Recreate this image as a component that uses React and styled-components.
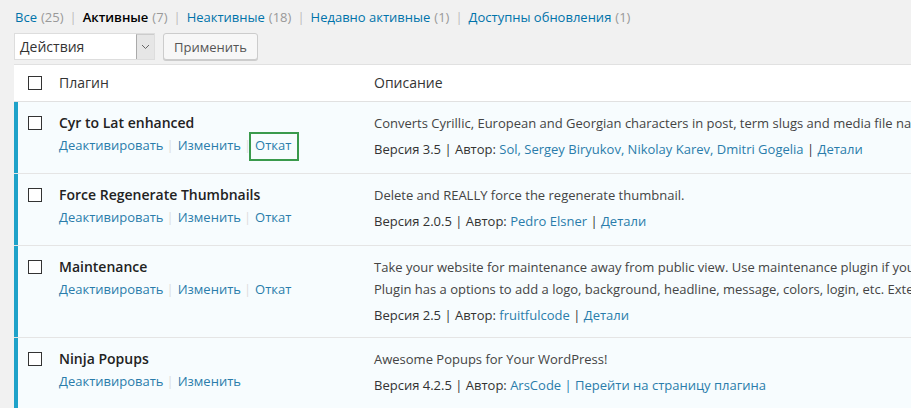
import styled, { createGlobalStyle } from "styled-components"

const GlobalStyle = createGlobalStyle`
  html, body {
    margin: 0;
    padding: 0;
    background: #f1f1f1;
    overflow: hidden;
  }
  body {
    font-family: "Open Sans", "Noto Sans", sans-serif;
    font-size: 13px;
    color: #444;
  }
`

const filters = [
  { label: "Все", count: 25 },
  { label: "Активные", count: 7, current: true },
  { label: "Неактивные", count: 18 },
  { label: "Недавно активные", count: 1 },
  { label: "Доступны обновления", count: 1 },
]

const plugins = [
  {
    name: "Cyr to Lat enhanced",
    actions: ["Деактивировать", "Изменить", "Откат"],
    marked: "Откат",
    desc: [
      "Converts Cyrillic, European and Georgian characters in post, term slugs and media file names to Latin ones.",
    ],
    version: "3.5",
    author: "Sol, Sergey Biryukov, Nikolay Karev, Dmitri Gogelia",
    more: "Детали",
  },
  {
    name: "Force Regenerate Thumbnails",
    actions: ["Деактивировать", "Изменить", "Откат"],
    desc: ["Delete and REALLY force the regenerate thumbnail."],
    version: "2.0.5",
    author: "Pedro Elsner",
    more: "Детали",
  },
  {
    name: "Maintenance",
    actions: ["Деактивировать", "Изменить", "Откат"],
    desc: [
      "Take your website for maintenance away from public view. Use maintenance plugin if you",
      "Plugin has a options to add a logo, background, headline, message, colors, login, etc. Exte",
    ],
    version: "2.5",
    author: "fruitfulcode",
    more: "Детали",
  },
  {
    name: "Ninja Popups",
    actions: ["Деактивировать", "Изменить"],
    desc: ["Awesome Popups for Your WordPress!"],
    version: "4.2.5",
    author: "ArsCode",
    more: "Перейти на страницу плагина",
  },
]

const Page = styled.div`
  padding: 6px 0 0 14px;
`

const SubNav = styled.ul`
  display: flex;
  margin: 0;
  padding: 0 0 0 1px;
  list-style: none;
  line-height: 22px;
  white-space: nowrap;
`

const NavItem = styled.li`
  color: #aaa;
  & + &::before {
    content: "|";
    margin: 0 6px 0 6px;
    color: #bbb;
  }
`

const NavLink = styled.a`
  color: ${(p) => (p.$current ? "#000" : "#0073aa")};
  font-weight: ${(p) => (p.$current ? 600 : 400)};
  text-decoration: none;
`

const Count = styled.span`
  color: #999;
  margin-left: 4px;
`

const Toolbar = styled.div`
  display: flex;
  gap: 8px;
  margin-top: 5px;
  height: 27px;
`

const Select = styled.div`
  display: flex;
  width: 141px;
  box-sizing: border-box;
  border: 1px solid #ddd;
  background: #fff;
  color: #333;
  font-size: 14px;
`

const SelectValue = styled.span`
  flex: 1;
  padding-left: 5px;
  line-height: 25px;
`

const SelectArrow = styled.span`
  display: flex;
  align-items: center;
  justify-content: center;
  width: 17px;
  background: #e6e6e6;
  border-left: 1px solid #aaa;
  border-top: 1px solid #ccc;
  color: #666;
`

const Button = styled.button`
  width: 95px;
  height: 27px;
  padding: 0;
  border: 1px solid #ccc;
  border-radius: 3px;
  background: #f7f7f7;
  box-shadow: 0 1px 0 #ccc;
  font-family: inherit;
  font-size: 13px;
  color: #555;
`

const Table = styled.div`
  width: 1200px;
  margin-top: 4px;
  border-top: 1px solid #e1e1e1;
  background: #fff;
`

const Row = styled.div`
  display: grid;
  grid-template-columns: 45px 315px 1fr;
  box-sizing: border-box;
  border-bottom: 1px solid #e5e5e5;
  line-height: 22px;
  background: ${(p) => (p.$head ? "#fff" : "#f7fcfe")};
  box-shadow: ${(p) => (p.$head ? "none" : "inset 4px 0 0 #1fa2c9")};
  padding: ${(p) => (p.$head ? "7px 0 7px" : "10px 0 11px")};
  ${(p) => p.$head && "border-bottom-color: #e1e1e1;"}
`

const CheckCell = styled.div`
  display: flex;
  align-items: flex-start;
  padding: 4px 0 0 14px;
`

const Check = styled.input.attrs({ type: "checkbox" })`
  appearance: none;
  margin: 0;
  width: 14px;
  height: 14px;
  box-sizing: border-box;
  border: 1px solid #333;
  background: #fff;
`

const HeadCell = styled.div`
  font-size: 14px;
  color: #333;
`

const Title = styled.div`
  font-size: 14px;
  font-weight: 600;
  color: #222;
`

const Actions = styled.div`
  display: flex;
  padding-bottom: 6px;
  white-space: nowrap;
`

const Action = styled.span`
  display: flex;
  & + &::before {
    content: "|";
    margin: 0 4px 0 3px;
    color: #ddd;
  }
`

const ActionLink = styled.a`
  position: relative;
  display: block;
  color: #2a7cab;
  text-decoration: none;
  ${(p) =>
    p.$marked &&
    `
    &::after {
      content: "";
      position: absolute;
      top: -2px;
      bottom: -5px;
      left: -6px;
      right: -8px;
      border: 2px solid #3a9a4c;
    }
  `}
`

const DescCell = styled.div`
  display: flex;
  flex-direction: column;
  gap: 4px;
  min-width: 0;
`

const DescText = styled.div`
  white-space: nowrap;
  color: #444;
`

const Meta = styled.div`
  white-space: pre;
  color: #333;
`

const MetaLink = styled.a`
  color: #2a7cab;
  text-decoration: none;
`

const Sep = styled.span`
  color: ${(p) => p.$color || "#333"};
`

export default function App() {
  return (
    <>
      <GlobalStyle />
      <Page>
        <SubNav>
          {filters.map((f) => (
            <NavItem key={f.label}>
              <NavLink $current={f.current}>{f.label}</NavLink>
              <Count>({f.count})</Count>
            </NavItem>
          ))}
        </SubNav>
        <Toolbar>
          <Select>
            <SelectValue>Действия</SelectValue>
            <SelectArrow>
              <svg width="9" height="6" viewBox="0 0 9 6">
                <path d="M1 1l3.5 3.5L8 1" fill="none" stroke="#666" strokeWidth="1" />
              </svg>
            </SelectArrow>
          </Select>
          <Button>Применить</Button>
        </Toolbar>
        <Table>
          <Row $head>
            <CheckCell>
              <Check />
            </CheckCell>
            <HeadCell>Плагин</HeadCell>
            <HeadCell>Описание</HeadCell>
          </Row>
          {plugins.map((p) => (
            <Row key={p.name}>
              <CheckCell>
                <Check />
              </CheckCell>
              <div>
                <Title>{p.name}</Title>
                <Actions>
                  {p.actions.map((a) => (
                    <Action key={a}>
                      <ActionLink $marked={p.marked === a}>{a}</ActionLink>
                    </Action>
                  ))}
                </Actions>
              </div>
              <DescCell>
                <div>
                  {p.desc.map((d) => (
                    <DescText key={d}>{d}</DescText>
                  ))}
                </div>
                <Meta>
                  {`Версия ${p.version} `}
                  <Sep>|</Sep>
                  {" Автор: "}
                  <MetaLink>{p.author}</MetaLink>
                  {" "}
                  <Sep $color={p.more === "Детали" ? "#333" : "#2a7cab"}>|</Sep>
                  {" "}
                  <MetaLink>{p.more}</MetaLink>
                </Meta>
              </DescCell>
            </Row>
          ))}
        </Table>
      </Page>
    </>
  )
}
